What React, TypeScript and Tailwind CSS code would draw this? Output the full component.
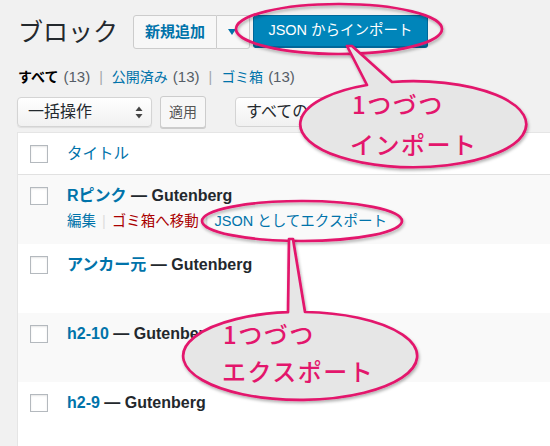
import React from 'react';

const rows = [
  { title: 'Rピンク', actions: true, alt: true },
  { title: 'アンカー元', actions: false, alt: false },
  { title: 'h2-10', actions: false, alt: true },
  { title: 'h2-9', actions: false, alt: false },
];

function Checkbox() {
  return (
    <div className="w-[18px] h-[18px] shrink-0 border border-[#b4b9be] bg-white shadow-[inset_0_1px_2px_rgba(0,0,0,0.1)]"></div>
  );
}

function SelectArrows() {
  return (
    <svg width="8" height="13" viewBox="0 0 8 13" className="shrink-0">
      <path d="M4 0.5 L7.5 5 L0.5 5 Z" fill="#444" />
      <path d="M4 12.5 L7.5 8 L0.5 8 Z" fill="#444" />
    </svg>
  );
}

export default function App() {
  return (
    <div className="relative w-[550px] h-[446px] overflow-hidden bg-[#f1f1f1] text-[#23282d] font-['Liberation_Sans','Noto_Sans_CJK_JP',sans-serif]">
      <div className="pl-[18px] pt-[15px]">
        {/* heading + buttons */}
        <div className="flex items-start">
          <h1 className="text-[25px] leading-[34px] font-normal w-[100px] whitespace-nowrap">ブロック</h1>
          <div className="ml-[15px] flex items-start">
            <div className="w-[84px] h-[34px] flex items-center justify-center border border-[#ccc] bg-[#f7f7f7] rounded-l-[3px] text-[#0073aa] text-[15px] font-semibold">
              新規追加
            </div>
            <div className="w-[33px] h-[34px] flex items-center justify-center border border-l-0 border-[#ccc] bg-[#f7f7f7] rounded-r-[3px]">
              <svg width="8" height="6" viewBox="0 0 8 6" className="-ml-[3px]">
                <path d="M0 0 L8 0 L4 6 Z" fill="#0073aa" />
              </svg>
            </div>
            <div className="ml-[3px] w-[175px] h-[32px] flex items-center justify-center bg-[#0085ba] border border-[#006799] rounded-[3px] shadow-[0_1px_0_#006799] text-white text-[14.5px]">
              JSON からインポート
            </div>
          </div>
        </div>

        {/* status links */}
        <div className="mt-[18px] text-[14px] leading-[20px] flex items-center whitespace-nowrap">
          <span className="font-bold text-black">すべて</span>
          <span className="text-[#555d66] ml-[5px] text-[15px]">(13)</span>
          <span className="text-[#a0a5aa] mx-[9px]">|</span>
          <span className="text-[#0073aa]">公開済み</span>
          <span className="text-[#555d66] ml-[5px] text-[15px]">(13)</span>
          <span className="text-[#a0a5aa] mx-[9px]">|</span>
          <span className="text-[#0073aa]">ゴミ箱</span>
          <span className="text-[#555d66] ml-[5px] text-[15px]">(13)</span>
        </div>

        {/* bulk actions */}
        <div className="mt-[9px] flex items-center -ml-px">
          <div className="w-[135px] h-[30px] flex items-center justify-between pl-[10px] pr-[8px] border border-[#d4d4d4] rounded-[4px] bg-gradient-to-b from-white to-[#f1f1f1] shadow-[0_1px_1px_rgba(0,0,0,0.08)] text-[16px]">
            <span>一括操作</span>
            <SelectArrows />
          </div>
          <div className="ml-[8px] w-[46px] h-[32px] flex items-center justify-center border border-[#ccc] bg-[#f7f7f7] rounded-[3px] shadow-[0_1px_0_#ccc] text-[14px] text-[#555]">
            適用
          </div>
          <div className="ml-[29px] w-[150px] h-[30px] flex items-center pl-[10px] border border-[#d4d4d4] rounded-[4px] bg-gradient-to-b from-white to-[#f1f1f1] text-[16px] whitespace-nowrap">
            すべての日付
          </div>
        </div>
      </div>

      {/* list table */}
      <div className="mt-[4px] ml-[17px] w-[560px] bg-white border-t border-l border-[#e5e5e5]">
        <div className="h-[42px] flex items-center pl-[12px] border-b border-[#e1e1e1]">
          <Checkbox />
          <span className="ml-[19px] text-[15.5px] text-[#0073aa]">タイトル</span>
        </div>
        {rows.map((r, i) => (
          <div key={i} className={`h-[69px] flex items-start pl-[12px] ${r.alt ? 'bg-[#f9f9f9]' : 'bg-white'}`}>
            <div className="mt-[12px]">
              <Checkbox />
            </div>
            <div className="ml-[19px] pt-[9px]">
              <div className="text-[16px] leading-[23px] font-bold whitespace-nowrap">
                <span className="text-[#0073aa]">{r.title}</span>
                <span className="text-[#23282d]"> — Gutenberg</span>
              </div>
              {r.actions && (
                <div className="mt-[3px] text-[14.5px] leading-[22px] whitespace-nowrap flex items-center">
                  <span className="text-[#0073aa]">編集</span>
                  <span className="text-[#ddd] mx-[6px]">|</span>
                  <span className="text-[#a00]">ゴミ箱へ移動</span>
                  <span className="text-[#ddd] mx-[6px]">|</span>
                  <span className="text-[#0073aa]">JSON としてエクスポート</span>
                </div>
              )}
            </div>
          </div>
        ))}
      </div>

      {/* annotations */}
      <svg className="absolute inset-0 pointer-events-none" width="550" height="446" viewBox="0 0 550 446">
        <defs>
          <filter id="sh" x="-20%" y="-20%" width="140%" height="150%">
            <feDropShadow dx="1" dy="2" stdDeviation="1.5" floodColor="#000" floodOpacity="0.3" />
          </filter>
        </defs>
        <ellipse cx="339" cy="29" rx="103" ry="25" fill="none" stroke="#e3166c" strokeWidth="2.7" filter="url(#sh)" />
        <ellipse cx="302" cy="221" rx="100" ry="20" fill="none" stroke="#e3166c" strokeWidth="2.7" filter="url(#sh)" />

        <path
          d="M367 85 L347 46 L352 46 L392 82 A113 43 0 1 1 367 85 Z"
          fill="#e6e6e6"
          stroke="#e3166c"
          strokeWidth="2.7"
          strokeLinejoin="round"
          filter="url(#sh)"
        />
        <path
          d="M288 312.2 L289 239 L293 239 L305 312 A117 44 0 1 1 288 312.2 Z"
          fill="#e6e6e6"
          stroke="#e3166c"
          strokeWidth="2.7"
          strokeLinejoin="round"
          filter="url(#sh)"
        />

        <g fill="#e3166c" fontSize="24" fontWeight="500" letterSpacing="1.5" fontFamily="'Noto Sans CJK JP', sans-serif">
          <text x="352" y="114">1つづつ</text>
          <text x="350" y="154">インポート</text>
          <text x="223" y="344">1つづつ</text>
          <text x="222" y="381">エクスポート</text>
        </g>
      </svg>
    </div>
  );
}
